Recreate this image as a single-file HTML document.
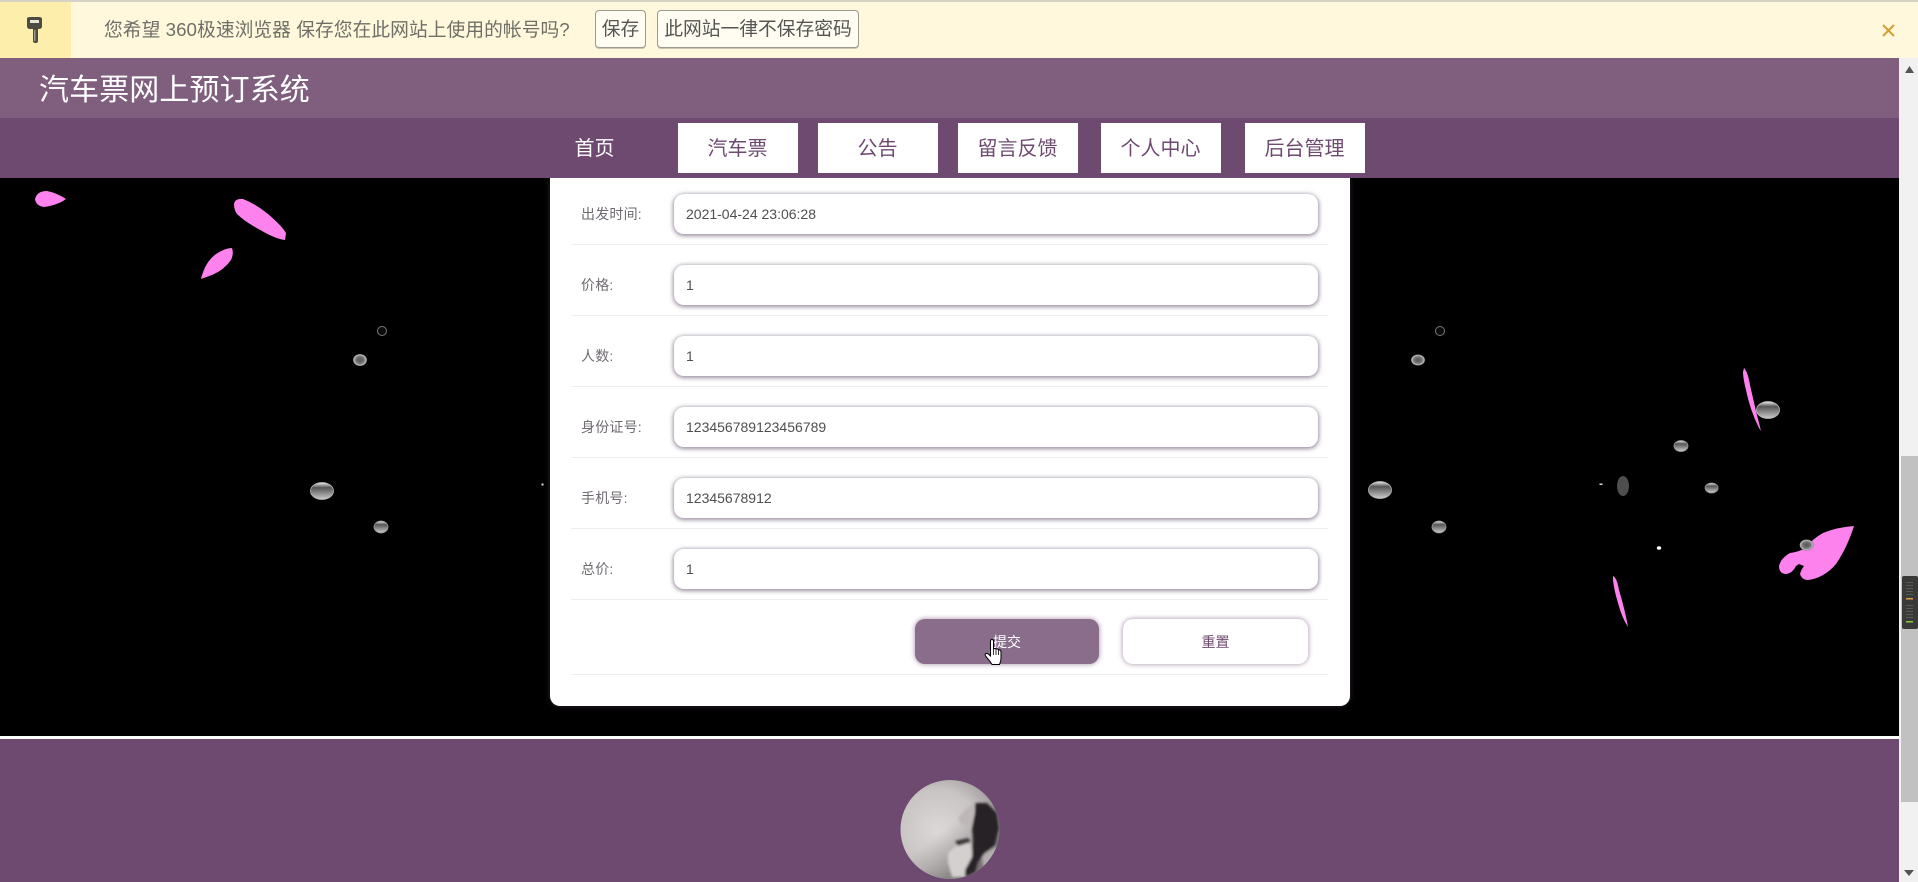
<!DOCTYPE html>
<html lang="zh-CN">
<head>
<meta charset="utf-8">
<title>汽车票网上预订系统</title>
<style>
html,body{margin:0;padding:0;width:1918px;height:882px;overflow:hidden;background:#000;font-family:"Liberation Sans","Noto Sans CJK SC",sans-serif}
div,span{position:absolute;box-sizing:border-box;white-space:nowrap}
.bar{left:0;top:0;width:1918px;height:58px;background:#fff8dc;border-top:2px solid #d6d3c4}
.key{left:0;top:0;width:71px;height:56px;background:#fdeeab}
.ask{left:104px;top:15px;font-size:18.75px;line-height:26px;color:#6f6f68;letter-spacing:.04px}
.sb{top:8px;height:38px;background:#fffdf2;border:1px solid #9c9a8c;border-radius:4px;font-size:18.75px;line-height:36px;text-align:center;color:#555;box-shadow:0 1px 0 #c9c6b5}
.title{left:0;top:58px;width:1899px;height:60px;background:#7f5e7e}
.title span{left:39px;top:12px;font-size:30px;line-height:42px;color:#fff;letter-spacing:.1px}
.nav{left:0;top:118px;width:1899px;height:60px;background:#6e4a71}
.it{top:5px;height:50px;background:#fff;color:#6e4a71;font-size:20px;line-height:52px;text-align:center;text-indent:-1px}
.card{left:550px;top:178px;width:800px;height:528px;background:#fff;border-radius:0 0 10px 10px;box-shadow:0 0 6px rgba(110,74,113,.45)}
.lb{left:581px;width:90px;font-size:14px;line-height:20px;color:#6f6a72;letter-spacing:.2px}
.in{left:674px;width:644px;height:40px;background:#fff;border-radius:10px;box-shadow:0 1px 4px 1px rgba(90,68,98,.6);font-size:14px;line-height:40px;padding-left:12px;color:#4f4f4f}
.ln{left:571px;width:757px;height:1px;background:#eeeeee}
.btn{top:619px;height:45px;border-radius:10px;font-size:14px;line-height:46px;text-align:center;box-shadow:0 0 4px 1px rgba(110,74,113,.45)}
.white{left:0;top:736px;width:1899px;height:3px;background:#fff}
.foot{left:0;top:739px;width:1899px;height:143px;background:#6e4a71}
.scroll{left:1899px;top:58px;width:19px;height:824px;background:#f1f1f1}
</style>
</head>
<body>
<svg style="position:absolute;left:0;top:0" width="1899" height="882" viewBox="0 0 1899 882">
<defs>
<radialGradient id="d" cx=".5" cy=".5" r=".55"><stop offset="0" stop-color="#555"/><stop offset=".55" stop-color="#777"/><stop offset=".8" stop-color="#bbb"/><stop offset="1" stop-color="#222"/></radialGradient>
<linearGradient id="e" x1="0" y1="0" x2="0" y2="1"><stop offset="0" stop-color="#eee"/><stop offset=".3" stop-color="#555"/><stop offset=".6" stop-color="#888"/><stop offset="1" stop-color="#ccc"/></linearGradient>
</defs>
<g fill="#fd82ee">
<path d="M35 199Q37 191 47 191Q57 193 66 199Q58 205 44 207Q36 206 35 199Z"/>
<path d="M234 204Q235 198 243 199Q256 204 268 214Q282 226 286 233L285 240Q276 239 262 231Q245 222 237 214Q234 210 234 204Z"/>
<path d="M201 279Q205 262 216 254Q225 248 232 248Q234 254 231 260Q224 270 212 275Z"/>
<path d="M1744 368Q1748 372 1750 385Q1755 408 1761 431L1759 428Q1750 410 1746 390Q1743 378 1743 372Z"/>
<path d="M1613 576Q1617 578 1619 590Q1625 610 1628 627Q1622 618 1618 603Q1614 590 1613 580Z"/>
<path d="M1854 526Q1838 527 1823 533Q1812 539 1806 548Q1798 552 1790 553Q1781 558 1779 566Q1779 573 1785 574Q1792 574 1796 566L1799 564L1804 566Q1801 570 1800 574Q1802 580 1808 580Q1824 578 1836 564Q1847 548 1854 526Z"/>
</g>
<g>
<ellipse cx="382" cy="331" rx="4.500" ry="4.500" fill="#0c0c0c" stroke="#777" stroke-width="1"/>
<ellipse cx="360" cy="360" rx="7" ry="6" fill="url(#d)"/>
<ellipse cx="322" cy="491" rx="11.500" ry="8.500" fill="url(#e)" stroke="#bbb" stroke-width=".8"/>
<ellipse cx="381" cy="527" rx="7" ry="6" fill="url(#e)" stroke="#999" stroke-width=".8"/>
<rect x="541.500" y="483.500" width="2" height="2" fill="#ddd"/>
<ellipse cx="1440" cy="331" rx="4.500" ry="4.500" fill="#0c0c0c" stroke="#777" stroke-width="1"/>
<ellipse cx="1418" cy="360" rx="7" ry="5.500" fill="url(#d)"/>
<ellipse cx="1380" cy="490" rx="11.500" ry="8.500" fill="url(#e)" stroke="#bbb" stroke-width=".8"/>
<ellipse cx="1439" cy="527" rx="7" ry="6" fill="url(#e)" stroke="#999" stroke-width=".8"/>
<ellipse cx="1623" cy="486" rx="6" ry="10" fill="#4e4e4e"/>
<rect x="1599.500" y="483.500" width="3" height="1.500" fill="#ddd"/>
<ellipse cx="1681" cy="446" rx="7" ry="5.500" fill="url(#e)" stroke="#999" stroke-width=".8"/>
<ellipse cx="1711.600" cy="488" rx="6.500" ry="5" fill="url(#e)" stroke="#999" stroke-width=".8"/>
<ellipse cx="1659" cy="548" rx="2.200" ry="1.800" fill="#fff"/>
<ellipse cx="1768" cy="410" rx="11.500" ry="8.500" fill="url(#e)" stroke="#bbb" stroke-width=".8"/>
<ellipse cx="1806.600" cy="545" rx="7" ry="5.500" fill="url(#d)"/>
</g>
</svg>

<div class="bar">
  <div class="key">
    <svg style="position:absolute;left:24px;top:13px" width="22" height="30" viewBox="0 0 22 30">
      <path d="M3 4Q3 2 6 2H15Q18 2 18 4V11Q18 14 15 14H14V26Q14 28 11.500 28Q9 28 9 26V14H6Q3 14 3 11Z" fill="#4b4b43"/>
      <rect x="6" y="5" width="9" height="3" fill="#e8e6d8"/>
      <rect x="10" y="15" width="1.500" height="11" fill="#9a9a8c"/>
    </svg>
  </div>
  <span class="ask">您希望 360极速浏览器 保存您在此网站上使用的帐号吗?</span>
  <div class="sb" style="left:595px;width:51px">保存</div>
  <div class="sb" style="left:657px;width:202px">此网站一律不保存密码</div>
  <svg style="position:absolute;left:1881px;top:21px" width="15" height="15" viewBox="0 0 15 15"><path d="M2 2L13 13M13 2L2 13" stroke="#d4a030" stroke-width="2" fill="none"/></svg>
</div>

<div class="title"><span>汽车票网上预订系统</span></div>
<div class="nav">
  <div class="it" style="left:535px;width:120px;background:none;color:#fff">首页</div>
  <div class="it" style="left:678px;width:120px">汽车票</div>
  <div class="it" style="left:818px;width:120px">公告</div>
  <div class="it" style="left:958px;width:120px">留言反馈</div>
  <div class="it" style="left:1101px;width:120px">个人中心</div>
  <div class="it" style="left:1245px;width:120px">后台管理</div>
</div>

<div class="card"></div>

<div class="lb" style="top:204px">出发时间:</div>
<div class="in" style="top:194px">2021-04-24 23:06:28</div>
<div class="ln" style="top:244px"></div>

<div class="lb" style="top:275px">价格:</div>
<div class="in" style="top:265px">1</div>
<div class="ln" style="top:315px"></div>

<div class="lb" style="top:346px">人数:</div>
<div class="in" style="top:336px">1</div>
<div class="ln" style="top:386px"></div>

<div class="lb" style="top:417px">身份证号:</div>
<div class="in" style="top:407px">123456789123456789</div>
<div class="ln" style="top:457px"></div>

<div class="lb" style="top:488px">手机号:</div>
<div class="in" style="top:478px">12345678912</div>
<div class="ln" style="top:528px"></div>

<div class="lb" style="top:559px">总价:</div>
<div class="in" style="top:549px">1</div>
<div class="ln" style="top:599px"></div>

<div class="btn" style="left:915px;width:184px;background:#8a6c8b;color:#fff">提交</div>
<div class="btn" style="left:1123px;width:185px;background:#fff;color:#6e4a71">重置</div>
<div class="ln" style="top:674px"></div>

<svg style="position:absolute;left:984px;top:638px" width="20" height="28" viewBox="0 0 20 28">
  <path d="M6.500 16V3Q6.500 1.500 8 1.500Q9.500 1.500 9.500 3V11Q11 10 12 11Q13.500 10.500 14.500 11.800Q16.500 11.500 17 13.500V20Q17 23 15.500 26.500H8Q6 23 4 21L1.500 18Q.5 16 2 15.500Q3.500 15 6.500 18Z" fill="#fff" stroke="#000" stroke-width="1"/>
  <path d="M9.500 11V17M12 11V17M14.500 12V17" stroke="#000" stroke-width=".8" fill="none"/>
</svg>

<div class="white"></div>
<div class="foot"></div>
<svg style="position:absolute;left:900px;top:780px" width="100" height="100" viewBox="0 0 100 100">
  <defs>
    <clipPath id="c"><circle cx="50" cy="49.500" r="49.500"/></clipPath>
    <radialGradient id="g" cx=".38" cy=".5" r=".68"><stop offset="0" stop-color="#dcd8d8"/><stop offset=".6" stop-color="#c9c4c4"/><stop offset="1" stop-color="#9a9494"/></radialGradient>
    <linearGradient id="s" x1=".3" y1=".6" x2=".6" y2="1"><stop offset="0" stop-color="#888" stop-opacity="0"/><stop offset="1" stop-color="#6a6666" stop-opacity=".8"/></linearGradient>
    <filter id="b"><feGaussianBlur stdDeviation="1.200"/></filter>
  </defs>
  <g clip-path="url(#c)">
    <rect width="100" height="100" fill="url(#g)"/>
    <rect width="100" height="100" fill="url(#s)"/>
    <g filter="url(#b)">
      <path d="M82 75L100 65V90L84 95Z" fill="#b5b0b0"/>
      <path d="M58 38L68 27L75 23L72 47L62 45Z" fill="#bdb8b7"/>
      <path d="M48 73L57 65L70 62L73 77L65 97L52 97L48 83Z" fill="#d4d0cf"/>
      <path d="M55 61L68 58L71 62L58 66Z" fill="#3a3839"/>
      <path d="M75 23L87 23L97 33L99 48L95 65L85 73L78 82L75 92L65 97L65 90L72 77L73 60L72 47L75 33Z" fill="#262425"/>
    </g>
  </g>
</svg>

<div class="scroll">
  <svg style="position:absolute;left:0;top:0" width="19" height="824" viewBox="0 0 19 824">
    <path d="M6 15L10.500 8L15 15Z" fill="#555"/>
    <rect x="2" y="398" width="17" height="346" fill="#c1c1c1"/>
    <path d="M5 812H15L10 818Z" fill="#555"/>
    <rect x="3" y="518" width="16" height="53" rx="2" fill="#3a3a38"/>
    <g fill="#5a5a58">
      <rect x="7" y="524" width="7" height="1"/><rect x="7" y="527" width="7" height="1"/>
      <rect x="7" y="530" width="7" height="1"/><rect x="7" y="533" width="7" height="1"/>
      <rect x="7" y="536" width="7" height="1"/><rect x="7" y="547" width="7" height="1"/>
      <rect x="7" y="550" width="7" height="1"/><rect x="7" y="553" width="7" height="1"/>
      <rect x="7" y="556" width="7" height="1"/><rect x="7" y="559" width="7" height="1"/>
    </g>
    <rect x="7" y="540" width="7" height="1.500" fill="#d9a050"/>
    <rect x="7" y="563" width="7" height="1.500" fill="#8fc840"/>
  </svg>
</div>
</body>
</html>
